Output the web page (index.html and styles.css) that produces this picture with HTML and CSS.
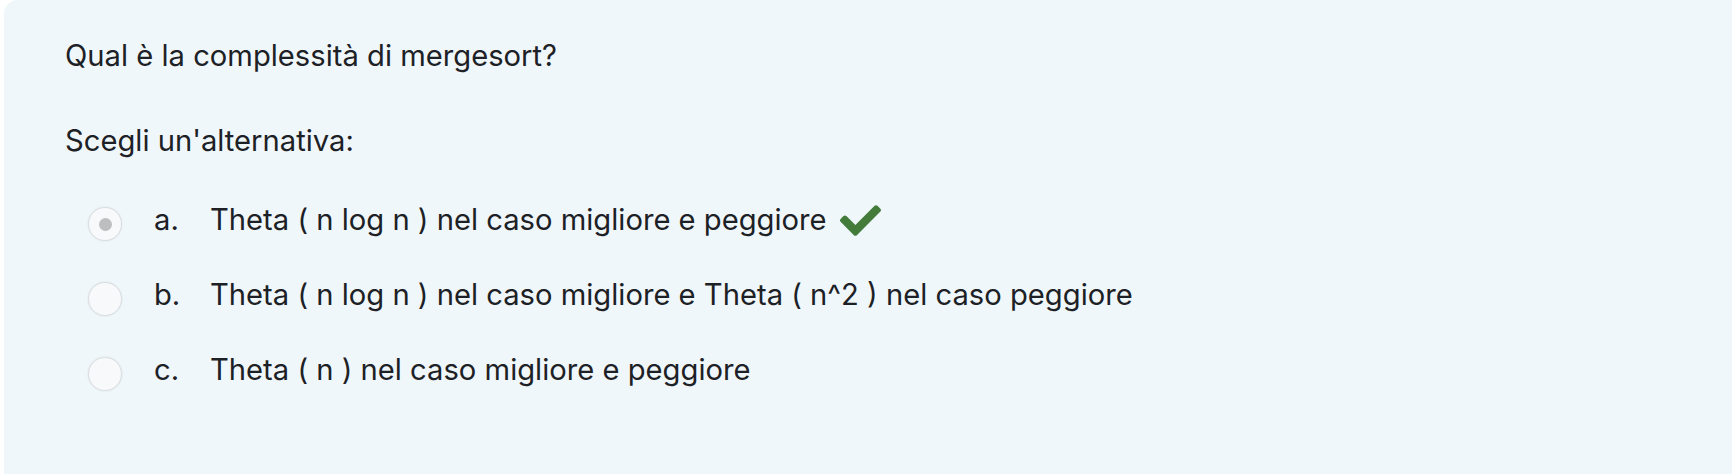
FILE: index.html
```html
<!DOCTYPE html>
<html lang="it">
<head>
<meta charset="utf-8">
<title>Domanda</title>
<link rel="stylesheet" href="styles.css">
</head>
<body>
<div class="formulation">
  <div class="qtext">Qual è la complessità di mergesort?</div>
  <div class="ablock">
    <div class="prompt">Scegli un'alternativa:</div>
    <div class="answers">
      <div class="opt">
        <span class="radio checked"></span>
        <span class="letter">a.</span>
        <span class="label">Theta ( n log n ) nel caso migliore e peggiore</span>
        <svg class="tick" viewBox="0 64 512 384" aria-hidden="true"><path d="M173.898 439.404l-166.4-166.4c-9.997-9.997-9.997-26.206 0-36.204l36.203-36.204c9.997-9.998 26.207-9.998 36.204 0L192 312.69 432.095 72.596c9.997-9.997 26.207-9.997 36.204 0l36.203 36.204c9.997 9.997 9.997 26.206 0 36.204l-294.4 294.401c-9.998 9.997-26.207 9.997-36.204-.001z"/></svg>
      </div>
      <div class="opt">
        <span class="radio"></span>
        <span class="letter">b.</span>
        <span class="label">Theta ( n log n ) nel caso migliore e Theta ( n^2 ) nel caso peggiore</span>
      </div>
      <div class="opt">
        <span class="radio"></span>
        <span class="letter">c.</span>
        <span class="label">Theta ( n ) nel caso migliore e peggiore</span>
      </div>
    </div>
  </div>
</div>
</body>
</html>
```

FILE: styles.css
```css
html, body {
  margin: 0;
  padding: 0;
  background: #ffffff;
}

body {
  font-family: Inter, "Noto Sans", "Liberation Sans", sans-serif;
  font-size: 29.2px;
  color: #1d2125;
  height: 474px;
  overflow: hidden;
}

.formulation {
  margin-left: 4px;
  height: 474px;
  background: #eff7fb;
  border-top-left-radius: 14px;
  padding: 38px 0 0 61px;
  box-sizing: border-box;
}

.qtext {
  line-height: 36px;
}

.ablock {
  margin-top: 49px;
}

.prompt {
  line-height: 36px;
}

.answers {
  display: flex;
  flex-direction: column;
  gap: 38px;
  margin-top: 43px;
}

.opt {
  display: flex;
  align-items: center;
  height: 36px;
  line-height: 36px;
}

.opt + .opt {
  margin-top: 1px;
}

.radio {
  width: 32px;
  height: 32px;
  margin-left: 23px;
  border-radius: 50%;
  border: 1px solid #dcdfe2;
  background: #f7f9fa;
  box-shadow: 0 0 2px rgba(0,0,0,0.10);
  display: flex;
  align-items: center;
  justify-content: center;
  flex: none;
  position: relative;
  top: 4px;
}

.radio.checked::after {
  content: "";
  width: 13px;
  height: 13px;
  border-radius: 50%;
  background: #bcbec0;
}

.letter {
  margin-left: 32px;
  width: 56px;
  flex: none;
}

.label {
  white-space: nowrap;
}

.tick {
  width: 41px;
  height: 31px;
  margin-left: 13px;
  fill: #437b3b;
  flex: none;
}
```
